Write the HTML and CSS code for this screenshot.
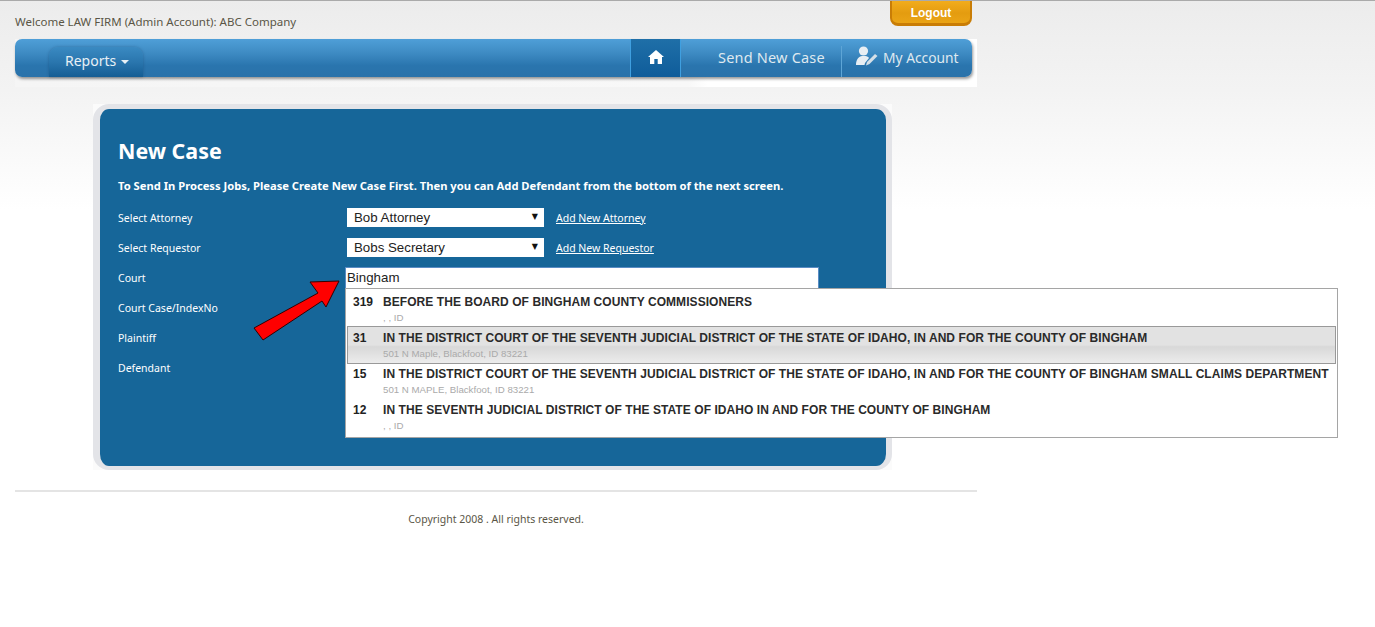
FILE: index.html
```html
<!DOCTYPE html>
<html lang="en">
  <head>
    <meta charset="UTF-8" />
    <title>New Case</title>
    <link rel="stylesheet" href="styles.css">
  </head>
  <body>
    <div class="page">
      <div class="top-row">
        <div class="welcome">Welcome LAW FIRM (Admin Account): ABC Company</div>
        <a class="logout" href="#">Logout</a>
      </div>

      <div class="nav-halo">
        <div class="nav">
          <a class="reports" href="#">Reports <span class="caret"></span></a>
          <a class="home" href="#">
            <svg width="16" height="14" viewBox="0 0 16 14">
              <path fill="#fff" d="M8 0 L16 7 L14 7 L14 14 L9.7 14 L9.7 9 L6.3 9 L6.3 14 L2 14 L2 7 L0 7 Z" />
            </svg>
          </a>
          <a class="nav-link send" href="#">Send New Case</a>
          <a class="nav-link account" href="#">
            <svg width="22" height="20" viewBox="0 0 22 20">
              <circle cx="7.5" cy="5" r="4.6" fill="#e8eef3" />
              <path fill="#e8eef3" d="M0 19 C0 13 3 10.5 6 10 L9.5 10 C11 10.3 12.5 11 13 12 L9 17 L8.5 19 Z" />
              <path fill="#d5dfe7" d="M10 19.5 L11 16 L19 8 L21.5 10 L13.5 18 Z" />
            </svg>
            My Account
          </a>
        </div>
      </div>

      <div class="panel-wrap">
        <div class="panel">
          <h1>New Case</h1>
          <p class="intro">To Send In Process Jobs, Please Create New Case First. Then you can Add Defendant from the bottom of the next screen.</p>

          <div class="form-row">
            <label>Select Attorney</label>
            <span class="select-box"><select><option>Bob Attorney</option></select></span>
            <a class="add-link" href="#">Add New Attorney</a>
          </div>
          <div class="form-row">
            <label>Select Requestor</label>
            <span class="select-box"><select><option>Bobs Secretary</option></select></span>
            <a class="add-link" href="#">Add New Requestor</a>
          </div>
          <div class="form-row">
            <label>Court</label>
            <div class="court-field">
              <input class="court-input" type="text" value="Bingham" />
              <ul class="suggestions">
                <li class="first">
                  <span class="num">319</span>
                  <div><div class="name">BEFORE THE BOARD OF BINGHAM COUNTY COMMISSIONERS</div><div class="addr">, , ID</div></div>
                </li>
                <li class="active">
                  <span class="num">31</span>
                  <div><div class="name">IN THE DISTRICT COURT OF THE SEVENTH JUDICIAL DISTRICT OF THE STATE OF IDAHO, IN AND FOR THE COUNTY OF BINGHAM</div><div class="addr">501 N Maple, Blackfoot, ID 83221</div></div>
                </li>
                <li>
                  <span class="num">15</span>
                  <div><div class="name">IN THE DISTRICT COURT OF THE SEVENTH JUDICIAL DISTRICT OF THE STATE OF IDAHO, IN AND FOR THE COUNTY OF BINGHAM SMALL CLAIMS DEPARTMENT</div><div class="addr">501 N MAPLE, Blackfoot, ID 83221</div></div>
                </li>
                <li>
                  <span class="num">12</span>
                  <div><div class="name">IN THE SEVENTH JUDICIAL DISTRICT OF THE STATE OF IDAHO IN AND FOR THE COUNTY OF BINGHAM</div><div class="addr">, , ID</div></div>
                </li>
              </ul>
              <svg class="arrow" width="90" height="76" viewBox="0 0 90 76">
                <polygon fill="#f00" stroke="#300" stroke-width="1" points="86,14 57,15 65,26 1,61 10,73 69,34 73,40" />
              </svg>
            </div>
          </div>
          <div class="form-row"><label>Court Case/IndexNo</label></div>
          <div class="form-row"><label>Plaintiff</label></div>
          <div class="form-row"><label>Defendant</label></div>
        </div>
      </div>

      <div class="footer">Copyright 2008 . All rights reserved.</div>
    </div>
  </body>
</html>
```

FILE: styles.css
```css
* {
  margin: 0;
  padding: 0;
  box-sizing: border-box;
}

body {
  font-family: "Noto Sans", sans-serif;
  font-size: 11px;
  color: #5a5646;
  background: linear-gradient(#ececec 0, #f3f3f3 90px, #ffffff 210px) no-repeat;
  background-color: white;
  border-top: 1px solid #aaa;
  min-height: 627px;
}

a {
  text-decoration: none;
}

.page {
  width: 962px;
  margin-left: 15px;
}

.top-row {
  display: flex;
  justify-content: space-between;
  height: 38px;
  padding-right: 5px;
}

.welcome {
  padding-top: 13px;
  font-size: 11.5px;
  line-height: 16px;
}

.logout {
  width: 82px;
  height: 25px;
  background: linear-gradient(#f2ac1c, #e49c10 55%, #eaa416);
  border: 2px solid #c97d06;
  border-top: none;
  border-bottom-width: 3px;
  border-radius: 0 0 8px 8px;
  color: white;
  font-family: "Liberation Sans", sans-serif;
  font-size: 12px;
  font-weight: bold;
  text-align: center;
  line-height: 24px;
}

.nav-halo {
  height: 48px;
  padding-right: 5px;
  background: linear-gradient(90deg, #f5f5f5, #f8f8f8 70%, #ffffff 72%);
}

.nav {
  display: flex;
  align-items: stretch;
  height: 38px;
  background: linear-gradient(#4f9fd8, #3f8cc4 35%, #2a75ae 70%, #2a72aa);
  border-radius: 7px;
  box-shadow: 1px 2px 3px rgba(0, 0, 0, 0.4);
}

.reports {
  margin: 8px 487px 0 34px;
  width: 94px;
  padding-left: 16px;
  border-radius: 9px 9px 0 0;
  background: linear-gradient(#3a8ac2, #2a76ae 50%, #155d94);
  box-shadow: 0 0 3px rgba(20, 60, 100, 0.4);
  color: #e8f0f6;
  font-size: 14px;
  line-height: 28px;
}

.caret {
  display: inline-block;
  margin-left: 1px;
  vertical-align: 2px;
  border-top: 4px solid #e8f0f6;
  border-left: 4px solid transparent;
  border-right: 4px solid transparent;
}

.home {
  display: flex;
  align-items: center;
  justify-content: center;
  width: 51px;
  background: linear-gradient(#1f6fa8, #0f5c9a);
  border-left: 1px solid #3f9fe0;
  border-right: 1px solid #3f9fe0;
  padding-bottom: 3px;
}

.nav-link {
  display: flex;
  align-items: center;
  color: #dfe9f0;
  font-size: 14.5px;
  padding-bottom: 3px;
}

.send {
  margin-left: 37px;
  width: 123px;
  letter-spacing: 0.2px;
}

.account {
  gap: 5px;
  padding-left: 14px;
  margin: 7px 0 0;
  height: 31px;
  border-left: 1px solid #5ea5d6;
  padding-bottom: 8px;
  font-size: 13.8px;
}

.account svg {
  margin-bottom: 3px;
}

.panel-wrap {
  width: 799px;
  margin: 17px 0 0 78px;
  background: #fbfbfb;
}

.panel {
  height: 366px;
  padding: 29px 18px 0;
  background: #166699;
  border: solid #e3e4e8;
  border-width: 5px 6px 4px 7px;
  border-radius: 16px;
  color: white;
}

h1 {
  font-size: 21.4px;
  font-weight: bold;
  line-height: 26px;
}

.intro {
  margin: 14px 0 8px;
  font-size: 11.2px;
  font-weight: bold;
  line-height: 16px;
}

.form-row {
  display: flex;
  align-items: center;
  height: 30px;
}

.form-row label {
  width: 228px;
  flex-shrink: 0;
  padding-top: 2px;
  font-size: 10.5px;
}

.select-box {
  position: relative;
  display: block;
  width: 197px;
  height: 19px;
  margin: 1px 0 0 1px;
}

.select-box::after {
  content: "▼";
  position: absolute;
  top: 4px;
  right: 6px;
  font-family: "DejaVu Sans", sans-serif;
  font-size: 8px;
  line-height: 10px;
  color: #111;
}

select {
  appearance: none;
  width: 100%;
  height: 19px;
  padding-left: 7px;
  border: none;
  border-radius: 0;
  background: white;
  color: #222;
  font-family: "Liberation Sans", sans-serif;
  font-size: 13.3px;
}

.add-link {
  margin-left: 12px;
  padding-top: 2px;
  color: white;
  text-decoration: underline;
  font-size: 10.5px;
}

.court-field {
  position: relative;
  margin: 2px 0 0 -1px;
}

.court-input {
  display: block;
  width: 474px;
  height: 22px;
  padding: 0 0 2px 1px;
  border: 1px solid #5a8cc4;
  background: white;
  color: #222;
  font-family: "Liberation Sans", sans-serif;
  font-size: 13.3px;
}

.suggestions {
  position: absolute;
  top: 21px;
  left: 0;
  width: 993px;
  height: 150px;
  padding: 0 1px 1px;
  list-style: none;
  background: white;
  border: 1px solid #a5a5a5;
  font-family: "Liberation Sans", sans-serif;
}

.suggestions li {
  display: flex;
  height: 36px;
  padding: 5px 0 0 5px;
  border: 1px solid transparent;
  border-width: 1px 1px 0;
}

.suggestions li.first {
  height: 37px;
}

.suggestions li.active {
  height: 38px;
  margin-bottom: -3px;
  position: relative;
  padding-top: 4px;
  border: 1px solid #999;
  background: linear-gradient(#e2e2e2 50%, #d8d8d8 55%, #ececec);
}

.num {
  width: 30px;
  flex-shrink: 0;
  font-size: 12px;
  font-weight: bold;
  line-height: 15px;
  color: #222;
}

.name {
  font-size: 12px;
  font-weight: bold;
  line-height: 15px;
  letter-spacing: 0.07px;
  white-space: nowrap;
  color: #2a2a2a;
}

.addr {
  margin-top: 1px;
  font-size: 9.7px;
  line-height: 14px;
  color: #aaa;
}

.arrow {
  position: absolute;
  top: 0;
  left: -92px;
}

.footer {
  margin-top: 20px;
  padding-top: 19px;
  border-top: 2px solid #e4e4e4;
  text-align: center;
  font-size: 10.5px;
  line-height: 16px;
}
```
